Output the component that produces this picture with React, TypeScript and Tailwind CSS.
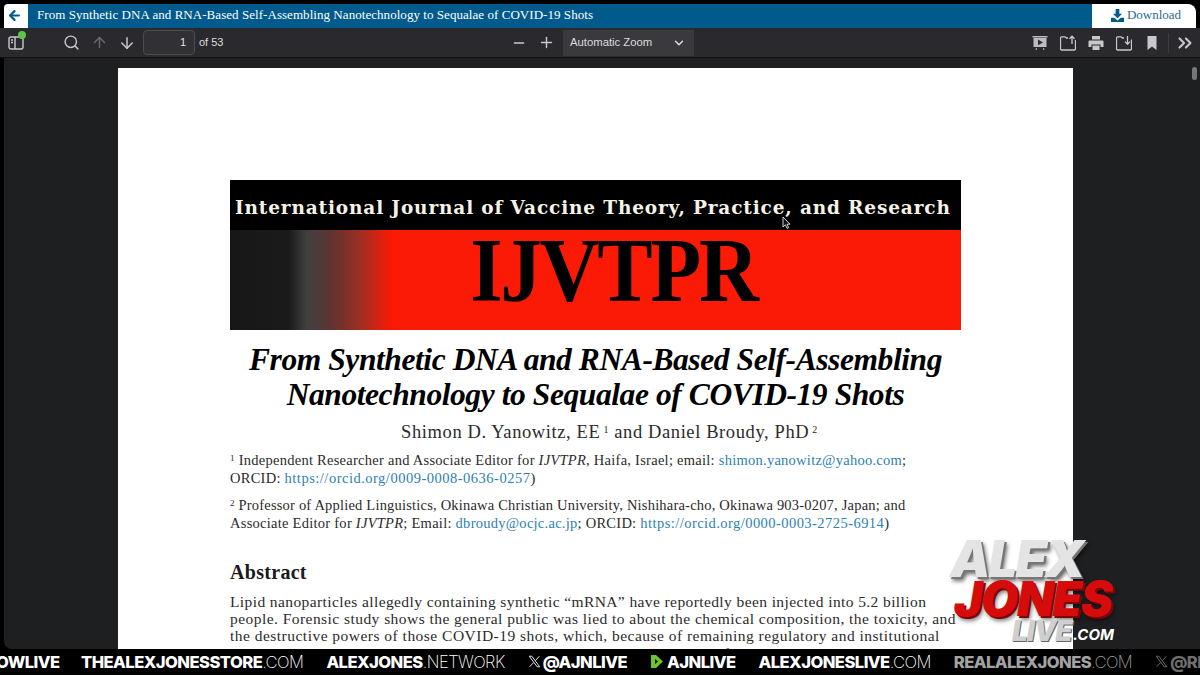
import React from 'react';
import { ArrowDown, ArrowLeft, ArrowUp, ChevronDown, ChevronsRight, Minus, Plus, Search } from 'lucide-react';

const serif = { fontFamily: '"Liberation Serif", serif' };

const SidebarIcon = () => (
    <svg width="16" height="16" viewBox="0 0 16 16" fill="none" stroke="#c9c9cb" strokeWidth="1.4">
        <rect x="1" y="2" width="14" height="12" rx="2" />
        <path d="M7 2v12" />
        <path d="M3 5h2M3 7.5h2" />
    </svg>
);

const PresentIcon = () => (
    <svg width="16" height="16" viewBox="0 0 16 16" fill="#bdbdc0">
        <rect x="0.5" y="1" width="15" height="1.5" />
        <path d="M1.5 3h13v9h-13z M6 4.6v5.6l5-2.8z" fillRule="evenodd" />
        <path d="M4 13h1l-.4 2h-1zM11 13h1l.4 2h-1z" />
    </svg>
);

const FolderOut = () => (
    <svg width="16" height="16" viewBox="0 0 16 16" fill="none" stroke="#c9c9cb" strokeWidth="1.3">
        <path d="M8 3H6.5L5 1.8H1.5a1 1 0 0 0-1 1V14a1 1 0 0 0 1 1h13a1 1 0 0 0 1-1V5" />
        <path d="M12 9V1.5M9.5 3.8L12 1.2l2.5 2.6" />
    </svg>
);

const FolderIn = () => (
    <svg width="16" height="16" viewBox="0 0 16 16" fill="none" stroke="#c9c9cb" strokeWidth="1.3">
        <path d="M8 3H6.5L5 1.8H1.5a1 1 0 0 0-1 1V14a1 1 0 0 0 1 1h13a1 1 0 0 0 1-1V4.5" />
        <path d="M11.5 1v8M9 6.6l2.5 2.6L14 6.6" />
    </svg>
);

const PrintIcon = () => (
    <svg width="16" height="16" viewBox="0 0 16 16" fill="#c9c9cb">
        <path d="M4 1h8v3.5H4z" />
        <path d="M1.5 5.5h13a1 1 0 0 1 1 1V12h-3V9.5h-9V12h-3V6.5a1 1 0 0 1 1-1z" />
        <path d="M4.5 10.5h7V15h-7z" />
    </svg>
);

const BookmarkIcon = () => (
    <svg width="16" height="16" viewBox="0 0 16 16" fill="#c9c9cb">
        <path d="M3.5 1h9v14L8 11.5 3.5 15z" />
    </svg>
);

// solid tray-and-arrow download glyph
const DownloadSolid = () => (
    <svg width="13" height="13" viewBox="0 0 14 14" fill="#005a8c">
        <path d="M5 0h4v5h3L7 10 2 5h3z" />
        <path d="M0 9.5h3.5L7 12.5l3.5-3H14V14H0z" />
    </svg>
);

const XMark = ({ color }: { color: string }) => (
    <svg width="13" height="13" viewBox="0 0 16 16" fill="none" stroke={color} strokeWidth="1.2">
        <path d="M1.5 1.5h3.2l9.8 13h-3.2z" />
        <path d="M14 1.5L9 7M7 9.2L2 14.5" />
    </svg>
);

const TickerItem = ({ bold, thin, gray }: { bold: string; thin?: string; gray?: boolean }) => (
    <span className={`flex items-baseline shrink-0 text-[16.6px] tracking-[-0.55px] ${gray ? 'text-[#a3a3a3]' : 'text-white'}`}>
        <span className="font-extrabold">{bold}</span>
        {thin && <span className="font-extralight">{thin}</span>}
    </span>
);

const App: React.FC = () => {
    return (
        <div className="relative w-[1200px] h-[675px] overflow-hidden bg-black flex flex-col pt-1" style={serif}>
            {/* Title bar */}
            <div className="h-6 shrink-0 flex pl-1 pr-1">
                <div className="w-6 flex items-center justify-center pr-[3px] pb-[2px] bg-white rounded-tl">
                    <ArrowLeft size={15} strokeWidth={3.5} className="text-[#005a8c]" />
                </div>
                <div className="flex-1 min-w-0 flex items-center pl-[9px] pb-[2px] bg-[#005a8c] text-white text-[13px] tracking-[0.05px] whitespace-nowrap">
                    From Synthetic DNA and RNA-Based Self-Assembling Nanotechnology to Sequalae of COVID-19 Shots
                </div>
                <div className="w-[104px] flex items-center justify-center gap-[3px] pl-[4px] pb-[2px] bg-white rounded-tr-lg text-[#2b6a92] text-[13px]">
                    <DownloadSolid />
                    Download
                </div>
            </div>

            {/* Toolbar */}
            <div className="h-[30px] shrink-0 relative flex items-center justify-between bg-[#2a2a2e] text-[#c9c9cb] border-b border-[#111113] pl-2 pr-1" style={{ fontFamily: '"Liberation Sans", sans-serif' }}>
                <div className="flex items-center">
                    <div className="relative w-4 h-4">
                        <SidebarIcon />
                        <span className="absolute -top-[4px] left-[10px] w-[8px] h-[8px] rounded-full bg-[#5fc24b]" />
                    </div>
                    <Search size={17} strokeWidth={2} className="ml-[39px]" />
                    <ArrowUp size={17} strokeWidth={2} className="ml-[11px] text-[#6a6a6d]" />
                    <ArrowDown size={18} strokeWidth={2} className="ml-[10px]" />
                    <div className="ml-[7px] w-[52px] h-[25px] flex items-center justify-end pr-[8px] rounded bg-[#313135] border border-[#4d4d50] text-[11px] text-[#e4e4e6]">1</div>
                    <span className="ml-[4px] text-[11px] text-[#dcdcde]">of 53</span>
                </div>
                <div className="absolute left-[511px] top-0 h-full flex items-center">
                    <Minus size={16} strokeWidth={2} />
                    <Plus size={17} strokeWidth={2} className="ml-[11px]" />
                    <div className="ml-[8px] w-[131px] h-[26px] flex items-center justify-between pl-[7px] pr-[8px] bg-[#3a3a3e] text-[11.3px] text-[#dcdcde]">
                        Automatic Zoom
                        <ChevronDown size={14} strokeWidth={2.5} />
                    </div>
                </div>
                <div className="flex items-center">
                    <PresentIcon />
                    <span className="ml-[12px]"><FolderOut /></span>
                    <span className="ml-[12px]"><PrintIcon /></span>
                    <span className="ml-[12px]"><FolderIn /></span>
                    <span className="ml-[12px]"><BookmarkIcon /></span>
                    <span className="ml-[8px] h-5 border-l border-[#3d3d41]" />
                    <ChevronsRight size={22} strokeWidth={2.25} className="ml-[5px]" />
                </div>
            </div>

            {/* Document area */}
            <div className="flex-1 min-h-0 relative overflow-hidden flex bg-black">
                <div className="flex-1 min-w-0 overflow-hidden bg-[#1e1f21] rounded-bl-lg pl-[114px] pt-[10px] ml-1">
                    <div className="w-[955px] h-[700px] bg-white pt-[112px] pl-[112px] text-[#1a1a1a]">
                        {/* Journal banner */}
                        <div className="w-[731px] h-[150px] flex flex-col">
                            <div className="h-[50px] shrink-0 bg-black flex items-center pl-[5px] pt-[6px] text-[#f5f2e8] text-[18.5px] font-bold tracking-[0.85px] whitespace-nowrap" style={{ fontFamily: '"DejaVu Serif", serif' }}>
                                International Journal of Vaccine Theory, Practice, and Research
                            </div>
                            <div className="h-[100px] shrink-0 flex items-center justify-center pb-[17px] pl-[36px] bg-[linear-gradient(90deg,#171717_0%,#1a1a1a_8%,#404040_10.5%,#5a3532_13.5%,#a02e22_18%,#fa1a06_22%,#fb1a06_100%)] text-black text-[83px] font-bold leading-none tracking-[-2.2px]">
                                <span className="inline-block scale-y-[1.09]">IJVTPR</span>
                            </div>
                        </div>

                        {/* Title */}
                        <div className="w-[731px] mt-[12px] text-center text-black text-[31.5px] leading-[35px] italic font-bold tracking-[-0.42px] whitespace-nowrap">
                            <p>From Synthetic DNA and RNA-Based Self-Assembling</p>
                            <p>Nanotechnology to Sequalae of COVID-19 Shots</p>
                        </div>
                        <p className="w-[731px] mt-[9px] pl-[28px] text-center text-[18.5px] leading-[22px] tracking-[0.6px] text-[#2b2b2b] whitespace-nowrap">
                            Shimon D. Yanowitz, EE<sup className="text-[10px]"> 1</sup> and Daniel Broudy, PhD<sup className="text-[10px]"> 2</sup>
                        </p>

                        {/* Affiliations */}
                        <div className="mt-[8px] text-[14.5px] leading-[18px] tracking-[0.26px] text-[#2b2b2b] whitespace-nowrap">
                            <p><sup className="text-[9px]">1</sup> Independent Researcher and Associate Editor for <i>IJVTPR</i>, Haifa, Israel; email: <span className="text-[#2d7fb5]">shimon.yanowitz@yahoo.com</span>;</p>
                            <p>ORCID: <span className="text-[#2d7fb5] tracking-[0.5px]">https://orcid.org/0009-0008-0636-0257</span>)</p>
                            <p className="mt-[9px] tracking-[0.2px]"><sup className="text-[9px]">2</sup> Professor of Applied Linguistics, Okinawa Christian University, Nishihara-cho, Okinawa 903-0207, Japan; and</p>
                            <p>Associate Editor for <i>IJVTPR</i>; Email: <span className="text-[#2d7fb5]">dbroudy@ocjc.ac.jp</span>; ORCID: <span className="text-[#2d7fb5] tracking-[0.45px]">https://orcid.org/0000-0003-2725-6914</span>)</p>
                        </div>

                        {/* Abstract */}
                        <h2 className="mt-[28px] text-[20px] leading-[24px] font-bold tracking-[0.3px] text-[#1a1a1a]">Abstract</h2>
                        <div className="mt-[9px] text-[15.5px] leading-[17.2px] tracking-[0.45px] text-[#2b2b2b] whitespace-nowrap">
                            <p className="tracking-[0.4px]">Lipid nanoparticles allegedly containing synthetic “mRNA” have reportedly been injected into 5.2 billion</p>
                            <p>people. Forensic study shows the general public was lied to about the chemical composition, the toxicity, and</p>
                            <p className="tracking-[0.48px]">the destructive powers of those COVID-19 shots, which, because of remaining regulatory and institutional</p>
                            <p>barriers, were made legal and kept in use by a public-private partnership of many entities and the Pentagon's</p>
                        </div>
                    </div>
                </div>

                {/* Scrollbar */}
                <div className="w-[10px] shrink-0 bg-[#1e1f21] pt-[9px] pl-[5px]">
                    <div className="w-[5px] h-[13px] rounded-full bg-[#77777a]" />
                </div>
                <div className="w-[3px] shrink-0 bg-[#1e1f21]" />

                {/* Mouse cursor */}
                <svg className="absolute left-[782px] top-[158px]" width="10" height="14" viewBox="0 0 10 14">
                    <path d="M1 1v10l2.4-2.2 1.6 3.6 1.6-.7-1.6-3.5H8z" fill="#111" stroke="#fff" strokeWidth="0.8" />
                </svg>
            </div>

            {/* Show logo overlay */}
            <div className="absolute left-[950px] top-[538px] w-[180px] h-[112px] italic font-black pointer-events-none" style={{ fontFamily: 'Inter, sans-serif' }}>
                <div className="absolute left-0 -top-[3px] text-[51px] leading-[48px] tracking-[-2px] text-[#e4e4e4] [text-shadow:2px_2px_0_#777,3px_4px_4px_rgba(0,0,0,0.6)]">ALEX</div>
                <div className="absolute left-[4px] top-[36px] text-[48px] leading-[50px] tracking-[-1.5px] text-[#d60b0b] [text-shadow:2px_2px_0_#7c0505,3px_4px_4px_rgba(0,0,0,0.5)]">JONES</div>
                <div className="absolute left-[62px] top-[78px] text-[28px] leading-[30px] tracking-[-1px] text-[#cfcfcf] [text-shadow:1px_1px_0_#666]">LIVE</div>
                <div className="absolute left-[123px] top-[88px] text-[15px] leading-[18px] font-bold text-white">.COM</div>
            </div>

            {/* Ticker */}
            <div className="relative h-[26px] shrink-0 overflow-hidden bg-black flex items-center gap-[23px] pl-[81px] whitespace-nowrap" style={{ fontFamily: 'Inter, sans-serif' }}>
                <div className="absolute -left-[4px] top-0 h-full flex items-center"><TickerItem bold="OWLIVE" /></div>
                <TickerItem bold="THEALEXJONESSTORE" thin=".COM" />
                <TickerItem bold="ALEXJONES" thin=".NETWORK" />
                <span className="flex items-center gap-[2px] shrink-0">
                    <XMark color="#e5e5e5" />
                    <TickerItem bold="@AJNLIVE" />
                </span>
                <span className="flex items-center gap-[3px] shrink-0">
                    <svg width="14" height="15" viewBox="0 0 14 15"><path d="M1 1h5l7 6.5L6 14H1z M5 5v5l3-2.5z" fill="#6fc32b" fillRule="evenodd" /></svg>
                    <TickerItem bold="AJNLIVE" />
                </span>
                <TickerItem bold="ALEXJONESLIVE" thin=".COM" />
                <TickerItem bold="REALALEXJONES" thin=".COM" gray />
                <span className="flex items-center gap-[2px] shrink-0">
                    <XMark color="#6f6f6f" />
                    <span className="text-[16.6px] font-extrabold text-[#6f6f6f] tracking-[-0.55px]">@REALALEX</span>
                </span>
            </div>
        </div>
    );
};

export default App;
